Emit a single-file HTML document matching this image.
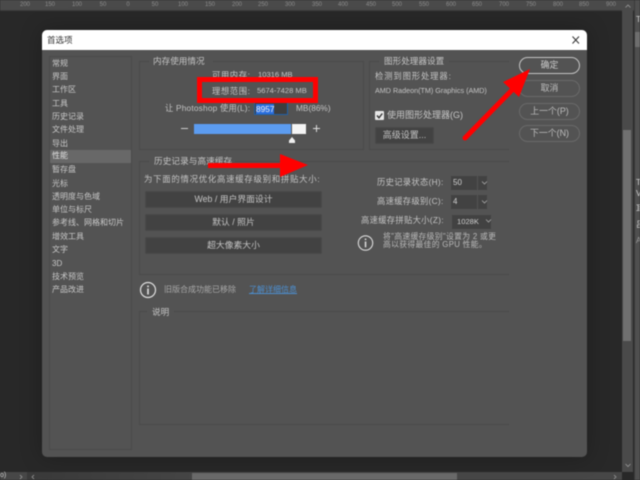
<!DOCTYPE html>
<html><head><meta charset="utf-8"><style>
html,body{margin:0;padding:0;width:640px;height:480px;overflow:hidden;background:#282828}
#r{position:relative;width:640px;height:480px;overflow:hidden;font-family:"Liberation Sans","Noto Sans CJK SC",sans-serif;filter:blur(.4px)}
.a,.t{position:absolute}
.t{white-space:nowrap;color:#c4c4c4;font-size:8.3px;line-height:12px}
.sb{left:52px;color:#c8c8c8;font-size:8px}
.rt{top:1px;color:#8c8c8c;font-size:6px;line-height:9px;width:20px;text-align:center}
.p{position:absolute;border:1px solid #4a4a4a}
.leg{position:absolute;background:#535353;height:10px}
.b{position:absolute;background:#424242;border:1px solid #4a4a4a;border-radius:1px;color:#c4c4c4;font-size:8.6px;text-align:center;line-height:15px;height:15px;box-sizing:content-box}
.rb{position:absolute;left:519px;width:59px;height:15px;border:1px solid #6a6a6a;border-radius:9px;color:#bcbcbc;font-size:8.9px;text-align:center;line-height:15px}
.i{position:absolute;background:#424242;color:#d0d0d0;font-size:8px;line-height:14px;height:14px;padding-left:2px;box-sizing:border-box}
.l{letter-spacing:.3px}
.g{position:absolute;left:636px;color:#d0d0d0;font-size:8px;line-height:9px;white-space:nowrap}
</style></head><body><div id="r">
<div class="a" style="left:0;top:0;width:640px;height:10px;background:#4a4a4a;border-bottom:1px solid #3c3c3c"></div>
<div class="t rt" style="left:15px">200</div><div class="t rt" style="left:40px">150</div><div class="t rt" style="left:67px">100</div><div class="t rt" style="left:93px">50</div><div class="t rt" style="left:118px">0</div><div class="t rt" style="left:145px">50</div><div class="t rt" style="left:173px">100</div><div class="t rt" style="left:200px">150</div><div class="t rt" style="left:227px">200</div><div class="t rt" style="left:253px">250</div><div class="t rt" style="left:280px">300</div><div class="t rt" style="left:307px">350</div><div class="t rt" style="left:333px">400</div><div class="t rt" style="left:361px">450</div><div class="t rt" style="left:387px">500</div><div class="t rt" style="left:414px">550</div><div class="t rt" style="left:441px">600</div><div class="t rt" style="left:467px">650</div><div class="t rt" style="left:494px">700</div><div class="t rt" style="left:521px">750</div><div class="t rt" style="left:548px">800</div><div class="t rt" style="left:574px">850</div><div class="t rt" style="left:601px">900</div>

<div class="a" style="left:622px;top:0;width:11px;height:472px;background:#4a4a4a"></div>
<div class="a" style="left:623px;top:130px;width:8px;height:211px;background:#707070"></div>
<svg class="a" style="left:624px;top:3px" width="8" height="466" fill="none" stroke="#999" stroke-width=".8"><path d="M1.500 4.500L4 2L6.500 4.500M1.500 461L4 463.500L6.500 461"/></svg>
<div class="a" style="left:634px;top:0;width:6px;height:480px;background:#4f4f4f;border-left:1px solid #3a3a3a"></div>
<div class="a" style="left:635px;top:32px;width:5px;height:15px;background:#6e6e6e"></div>
<div class="g" style="top:15px">T</div>
<div class="g" style="top:178px">T</div>
<div class="g" style="top:189px">V</div>
<div class="g" style="top:204px">耳</div>
<div class="g" style="top:220px">吕</div>
<div class="g" style="top:236px;color:#999">A</div>
<div class="a" style="left:0;top:472px;width:622px;height:8px;background:#474747"></div>
<div class="a" style="left:27px;top:472px;width:165px;height:8px;background:linear-gradient(90deg,#3a3a3a,#464646)"></div>
<div class="a" style="left:192px;top:473px;width:265px;height:7px;background:#6a6a6a"></div>
<div class="t" style="left:0;top:471px;font-size:7px;line-height:9px;color:#ccc">o)</div>
<svg class="a" style="left:0;top:472px" width="622" height="8" fill="none" stroke="#999" stroke-width=".8"><path d="M20 3L22 5L20 7M34 3L32 5L34 7M614 3L616 5L614 7"/></svg>

<div class="a" style="left:42px;top:30px;width:545px;height:427px;background:#535353;border-radius:5px;overflow:hidden;box-shadow:0 0 22px rgba(0,0,0,.25)">
<div class="a" style="left:0;top:0;width:545px;height:20px;background:#fff"></div>
</div>
<div class="t" style="left:47px;top:34px;color:#333;font-size:8.500px">首选项</div>
<svg class="a" style="left:571px;top:35px" width="10" height="10"><path d="M1.500 1.500L8 8.500M8 1.500L1.500 8.500" stroke="#333" stroke-width="1" fill="none"/></svg>

<div class="p" style="left:49px;top:56px;width:81px;height:392px"></div>
<div class="a" style="left:50px;top:150px;width:81px;height:12.500px;background:#686868"></div>
<div class="t sb" style="top:58px">常规</div><div class="t sb" style="top:71px">界面</div><div class="t sb" style="top:84px">工作区</div><div class="t sb" style="top:97.500px">工具</div><div class="t sb" style="top:110.500px">历史记录</div><div class="t sb" style="top:124px">文件处理</div><div class="t sb" style="top:137.500px">导出</div><div class="t sb" style="top:150px;color:#e0e0e0">性能</div><div class="t sb" style="top:164px">暂存盘</div><div class="t sb" style="top:177.500px">光标</div><div class="t sb" style="top:190.500px">透明度与色域</div><div class="t sb" style="top:204px">单位与标尺</div><div class="t sb" style="top:217px">参考线、网格和切片</div><div class="t sb" style="top:230.500px">增效工具</div><div class="t sb" style="top:244px">文字</div><div class="t sb" style="top:257.500px">3D</div><div class="t sb" style="top:270.500px">技术预览</div><div class="t sb" style="top:284px">产品改进</div>

<div class="p" style="left:139px;top:61px;width:223px;height:87px"></div>
<div class="leg" style="left:149px;top:56px;width:64px"></div>
<div class="t" style="left:153px;top:55px;font-size:8.600px">内存使用情况</div>
<div class="t" style="left:212px;top:69px;letter-spacing:.6px">可用内存:</div>
<div class="t" style="left:258px;top:69px;font-size:7.600px">10316 MB</div>
<div class="t" style="left:212px;top:85px;letter-spacing:.6px">理想范围:</div>
<div class="t" style="left:257px;top:85px;font-size:7.600px">5674-7428 MB</div>
<div class="t" style="left:165px;top:102px;letter-spacing:.2px">让 Photoshop 使用(L):</div>
<div class="a" style="left:254px;top:102px;width:34px;height:13px;background:#3e3e3e;border:1px solid #1f5fa8;box-sizing:border-box"></div>
<div class="a" style="left:256px;top:104px;width:18px;height:10px;background:#2a6fe0"></div>
<div class="t" style="left:256px;top:103px;color:#f0f0f0">8957</div>
<div class="t" style="left:296px;top:102px">MB(86%)</div>
<div class="a" style="left:181px;top:128px;width:7px;height:1.400px;background:#ccc"></div>
<div class="a" style="left:194px;top:124px;width:97px;height:10px;background:#5c9cf0"></div>
<div class="a" style="left:292px;top:124px;width:14px;height:10px;background:#f4f4f4"></div>
<div class="a" style="left:313px;top:128px;width:7px;height:1.400px;background:#ddd"></div>
<div class="a" style="left:316px;top:125px;width:1.400px;height:7px;background:#ddd"></div>
<svg class="a" style="left:286.500px;top:137px" width="10" height="7"><path d="M5 0L8 3.500V6H2V3.500Z" fill="#eee"/></svg>

<div class="a" style="left:369px;top:61px;width:139px;height:87px;border:1px solid #4a4a4a;border-right:0"></div>
<div class="leg" style="left:379px;top:56px;width:70px"></div>
<div class="t" style="left:384px;top:55px;font-size:8.600px">图形处理器设置</div>
<div class="t" style="left:375px;top:70px;letter-spacing:.9px">检测到图形处理器:</div>
<div class="t" style="left:375px;top:84.500px;font-size:7.200px">AMD Radeon(TM) Graphics (AMD)</div>
<div class="a" style="left:375px;top:111px;width:9px;height:9px;background:#e8e8e8;border-radius:1px"></div>
<svg class="a" style="left:375px;top:111px" width="9" height="9"><path d="M2 4.500L4 6.800L7.300 2.500" stroke="#333" stroke-width="1.400" fill="none"/></svg>
<div class="t" style="left:387px;top:109px;font-size:9px">使用图形处理器(G)</div>
<div class="b" style="left:375px;top:127px;width:57px;font-size:9px">高级设置...</div>

<div class="a" style="left:139px;top:161px;width:369px;height:112px;border:1px solid #4a4a4a;border-right:0"></div>
<div class="leg" style="left:149px;top:156px;width:86px"></div>
<div class="t" style="left:154px;top:155px;font-size:8.600px;letter-spacing:.1px">历史记录与高速缓存</div>
<div class="t" style="left:144px;top:173px;font-size:8.400px;letter-spacing:.75px">为下面的情况优化高速缓存级别和拼贴大小:</div>
<div class="b" style="left:145px;top:191px;width:175px;font-size:8.800px">Web / 用户界面设计</div>
<div class="b" style="left:145px;top:214px;width:175px;font-size:8.800px">默认 / 照片</div>
<div class="b" style="left:145px;top:237px;width:175px;font-size:8.800px">超大像素大小</div>

<div class="t l" style="left:377px;top:176px">历史记录状态(H):</div>
<div class="i" style="left:451px;top:176px;width:26px">50</div><div class="i" style="left:478px;top:176px;width:9px"></div>
<div class="t l" style="left:377px;top:195px">高速缓存级别(C):</div>
<div class="i" style="left:451px;top:195px;width:26px">4</div><div class="i" style="left:478px;top:195px;width:9px"></div>
<div class="t l" style="left:361px;top:214px">高速缓存拼贴大小(Z):</div>
<div class="i" style="left:452px;top:215px;width:39px;padding-left:5px;font-size:7.600px">1028K</div>
<svg class="a" style="left:478px;top:178px" width="14" height="48" fill="none" stroke="#aaa" stroke-width=".8"><path d="M4 3.500L6.500 6L9 3.500M4 22.500L6.500 25L9 22.500M8 41.500L10.500 44L13 41.500"/></svg>

<svg class="a" style="left:357px;top:234px" width="18" height="18"><circle cx="8.500" cy="9" r="7.200" fill="none" stroke="#ddd" stroke-width="1.100"/><rect x="7.800" y="4.500" width="1.500" height="1.600" fill="#ddd"/><rect x="7.800" y="7.500" width="1.500" height="5.800" fill="#ddd"/></svg>
<div class="t" style="left:383px;top:232.500px;font-size:7.800px;line-height:8.500px;letter-spacing:.32px;color:#bbb">将"高速缓存级别"设置为 2 或更<br>高以获得最佳的 GPU 性能。</div>

<svg class="a" style="left:139px;top:281px" width="18" height="18"><circle cx="9" cy="9" r="7.500" fill="none" stroke="#e0e0e0" stroke-width="1.200"/><rect x="8.200" y="4.500" width="1.600" height="1.700" fill="#e0e0e0"/><rect x="8.200" y="7.500" width="1.600" height="6" fill="#e0e0e0"/></svg>
<div class="t" style="left:164px;top:284px;font-size:8px;color:#a8a8a8">旧版合成功能已移除</div>
<div class="t" style="left:249px;top:284px;font-size:8px;color:#4d8fd0;text-decoration:underline">了解详细信息</div>

<div class="a" style="left:139px;top:311px;width:369px;height:112px;border:1px solid #4a4a4a;border-right:0"></div>
<div class="leg" style="left:147px;top:306px;width:27px"></div>
<div class="t" style="left:152px;top:306px;font-size:8.600px">说明</div>

<div class="rb" style="top:57px;height:15px;border-color:#c4c4c4;color:#ccc">确定</div>
<div class="rb" style="top:80px">取消</div>
<div class="rb" style="top:103px">上一个(P)</div>
<div class="rb" style="top:125px">下一个(N)</div>

<svg class="a" style="left:0;top:0" width="640" height="480">
<rect x="199.500" y="79.500" width="116" height="21" fill="none" stroke="#f00" stroke-width="5"/>
<path d="M208 163H280V154L308 165L280 177V168H208Z" fill="#f00"/>
<path d="M465 138L513 89" stroke="#f00" stroke-width="5" stroke-linecap="round" fill="none"/>
<path d="M530 69L503 82L519 97Z" fill="#f00"/>
</svg>
</div></body></html>
